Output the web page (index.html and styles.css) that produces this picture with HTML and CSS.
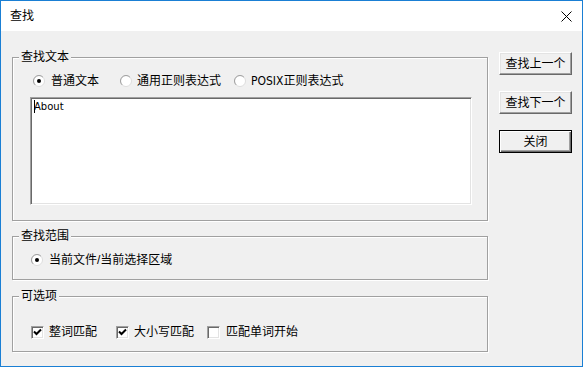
FILE: index.html
```html
<html>

<head>
    <meta charset="utf-8">
    <link rel="stylesheet" href="styles.css">
</head>

<body>
    <div class="window">
        <div class="titlebar">
            <span class="title">查找</span>
            <svg class="close" width="11" height="11" viewBox="0 0 11 11">
                <path d="M0.5 0.5 L10.5 10.5 M10.5 0.5 L0.5 10.5" stroke="#000" stroke-width="1" fill="none" />
            </svg>
        </div>

        <div class="client">
            <div class="groups">
                <fieldset class="group group-text">
                    <legend>查找文本</legend>
                    <div class="row row-modes">
                        <label class="opt opt-plain">
                            <svg class="radio" width="12" height="12" viewBox="0 0 12 12">
                                <circle cx="6" cy="6" r="5.5" fill="#fff" stroke="#dcdcdc" />
                                <path d="M2.11 9.89 A5.5 5.5 0 0 1 9.89 2.11" stroke="#a0a0a0" fill="none" />
                                <circle cx="6" cy="6" r="2" fill="#000" />
                            </svg>
                            普通文本
                        </label>
                        <label class="opt opt-regex">
                            <svg class="radio" width="12" height="12" viewBox="0 0 12 12">
                                <circle cx="6" cy="6" r="5.5" fill="#fff" stroke="#dcdcdc" />
                                <path d="M2.11 9.89 A5.5 5.5 0 0 1 9.89 2.11" stroke="#a0a0a0" fill="none" />
                            </svg>
                            通用正则表达式
                        </label>
                        <label class="opt opt-posix">
                            <svg class="radio" width="12" height="12" viewBox="0 0 12 12">
                                <circle cx="6" cy="6" r="5.5" fill="#fff" stroke="#dcdcdc" />
                                <path d="M2.11 9.89 A5.5 5.5 0 0 1 9.89 2.11" stroke="#a0a0a0" fill="none" />
                            </svg>
                            <span class="latin">POSIX</span>正则表达式
                        </label>
                    </div>
                    <div class="editbox"><span class="caret"></span>About</div>
                </fieldset>

                <fieldset class="group group-scope">
                    <legend>查找范围</legend>
                    <div class="row row-scope">
                        <label class="opt">
                            <svg class="radio" width="12" height="12" viewBox="0 0 12 12">
                                <circle cx="6" cy="6" r="5.5" fill="#fff" stroke="#dcdcdc" />
                                <path d="M2.11 9.89 A5.5 5.5 0 0 1 9.89 2.11" stroke="#a0a0a0" fill="none" />
                                <circle cx="6" cy="6" r="2" fill="#000" />
                            </svg>
                            当前文件/当前选择区域
                        </label>
                    </div>
                </fieldset>

                <fieldset class="group group-options">
                    <legend>可选项</legend>
                    <div class="row row-checks">
                        <label class="opt chk-word">
                            <span class="checkbox">
                                <svg width="9" height="9" viewBox="0 0 9 9">
                                    <path d="M1 3.5 L3.5 6 L8 1.5" stroke="#000" stroke-width="2" fill="none" />
                                </svg>
                            </span>
                            整词匹配
                        </label>
                        <label class="opt chk-case">
                            <span class="checkbox">
                                <svg width="9" height="9" viewBox="0 0 9 9">
                                    <path d="M1 3.5 L3.5 6 L8 1.5" stroke="#000" stroke-width="2" fill="none" />
                                </svg>
                            </span>
                            大小写匹配
                        </label>
                        <label class="opt chk-start">
                            <span class="checkbox"></span>
                            匹配单词开始
                        </label>
                    </div>
                </fieldset>
            </div>

            <div class="buttons">
                <button class="btn">查找上一个</button>
                <button class="btn">查找下一个</button>
                <button class="btn btn-default">关闭</button>
            </div>
        </div>
    </div>
</body>

</html>
```

FILE: styles.css
```css
:root {
    --face: #f0f0f0;
    --edge: #a0a0a0;
    --dark: #696969;
    --frame: #1a7fd4;
}

body {
    margin: 0px;
    font-family: "Liberation Sans", "Noto Sans CJK SC", sans-serif;
    font-size: 12px;
    color: #000;
}

.window {
    width: 583px;
    height: 367px;
    box-sizing: border-box;
    border: 1px solid var(--frame);
    background-color: var(--face);
    display: flex;
    flex-direction: column;
    overflow: hidden;
}

.titlebar {
    flex: none;
    height: 30px;
    background-color: #fff;
    display: flex;
    align-items: center;
    justify-content: space-between;
    padding: 0 10px 0 9px;
}

.title {
    font-size: 12px;
    line-height: 16px;
}

.client {
    flex: none;
    display: flex;
    flex-direction: row;
    align-items: flex-start;
    padding-left: 11px;
}

.groups {
    width: 476px;
    display: flex;
    flex-direction: column;
}

/* etched group box; content starts below the legend */
.group {
    margin: 0;
    min-inline-size: 0;
    border: 1px solid var(--edge);
    box-shadow: inset 1px 1px 0 #fff, 1px 1px 0 #fff;
    padding: 0 0 0 6px;
}

.group legend {
    padding: 0 2px;
    line-height: 15px;
    background-color: var(--face);
}

.group-text {
    margin-top: 19px;
    padding-top: 8px;
    padding-bottom: 15px;
}

.group-scope {
    margin-top: 8px;
    padding-top: 8px;
    padding-bottom: 11px;
}

.group-options {
    margin-top: 9px;
    padding-top: 20px;
    padding-bottom: 11px;
}

.row {
    display: flex;
    flex-direction: row;
    align-items: center;
    height: 16px;
}

.opt {
    display: flex;
    align-items: center;
    line-height: 16px;
    white-space: nowrap;
}

.latin {
    font-family: "Liberation Sans Narrow", "DejaVu Sans Condensed", sans-serif;
    font-size: 12px;
}

.radio {
    flex: none;
    margin-right: 6px;
}

.row-modes {
    padding-left: 14px;
}

.opt-plain {
    width: 87px;
}

.opt-regex {
    width: 114px;
}

.opt-regex .radio,
.opt-posix .radio {
    margin-right: 5px;
}

.row-scope {
    padding-left: 12px;
}

.row-checks {
    padding-left: 12px;
}

.checkbox {
    flex: none;
    width: 13px;
    height: 13px;
    box-sizing: border-box;
    background-color: #fff;
    border: 1px solid;
    border-color: #a0a0a0 #fff #fff #a0a0a0;
    box-shadow: inset 1px 1px 0 #696969, inset -1px -1px 0 #e3e3e3;
    display: flex;
    align-items: center;
    justify-content: center;
    margin-right: 5px;
}

.chk-word {
    width: 85px;
}

.chk-case {
    width: 91px;
}

.chk-start .checkbox {
    margin-right: 6px;
}

.editbox {
    margin: 8px 0 0 11px;
    width: 442px;
    height: 108px;
    box-sizing: border-box;
    background-color: #fff;
    border: 1px solid;
    border-color: var(--edge) #fff #fff var(--edge);
    box-shadow: inset 1px 1px 0 var(--dark), inset -1px -1px 0 #e3e3e3;
    padding: 2px 3px;
    font-family: "DejaVu Sans", sans-serif;
    font-size: 10px;
    line-height: 13px;
    display: flex;
    align-items: flex-start;
}

.caret {
    width: 1px;
    height: 13px;
    background-color: #000;
    margin-right: -1px;
}

.buttons {
    display: flex;
    flex-direction: column;
    gap: 16px;
    margin-left: 11px;
    padding-top: 21px;
}

.btn {
    width: 73px;
    height: 23px;
    box-sizing: border-box;
    padding: 0;
    background-color: var(--face);
    border: 1px solid;
    border-color: #fff var(--dark) var(--dark) #fff;
    box-shadow: inset -1px -1px 0 var(--edge), inset 1px 1px 0 #e3e3e3;
    font-family: "Liberation Sans", "Noto Sans CJK SC", sans-serif;
    font-size: 12px;
    line-height: 16px;
    color: #000;
}

.btn-default {
    border-color: #000;
    box-shadow: inset 1px 1px 0 #fff, inset -1px -1px 0 var(--dark), inset -2px -2px 0 var(--edge);
}
```
